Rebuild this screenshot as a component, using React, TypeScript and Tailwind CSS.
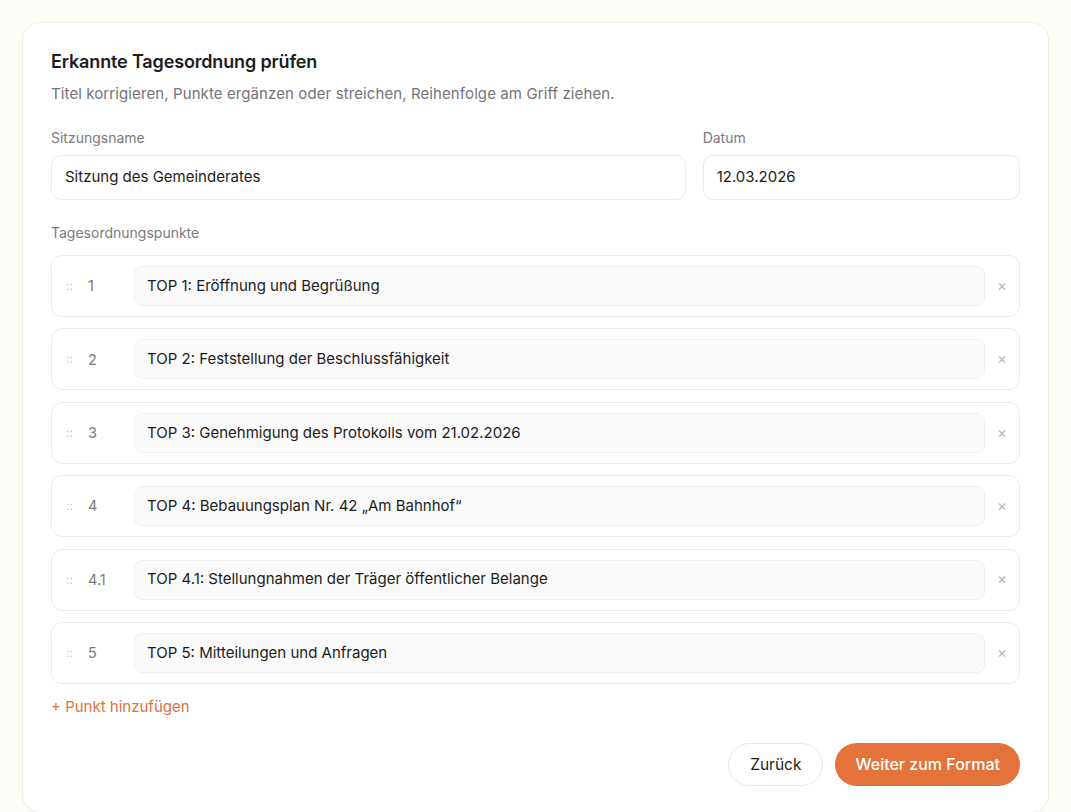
import React from "react";

const items = [
  { n: "1", t: "TOP 1: Eröffnung und Begrüßung" },
  { n: "2", t: "TOP 2: Feststellung der Beschlussfähigkeit" },
  { n: "3", t: "TOP 3: Genehmigung des Protokolls vom 21.02.2026" },
  { n: "4", t: "TOP 4: Bebauungsplan Nr. 42 „Am Bahnhof“" },
  { n: "4.1", t: "TOP 4.1: Stellungnahmen der Träger öffentlicher Belange" },
  { n: "5", t: "TOP 5: Mitteilungen und Anfragen" },
];

export default function App() {
  return (
    <div
      className="min-h-[812px] bg-[#fdfcf6] px-[22px] pt-[22px]"
      style={{ fontFamily: "Inter, 'Noto Sans', sans-serif" }}
    >
      <div className="rounded-[18px] border border-[#ecebe6] bg-white px-[28px] pt-[27px] pb-[26px]">
        <h1 className="text-[18px] font-semibold leading-[24px] text-[#1c1c1c] tracking-[-0.15px]">
          Erkannte Tagesordnung prüfen
        </h1>
        <p className="mt-[10px] text-[15px] leading-[20px] tracking-[0.1px] text-[#74747a]">
          Titel korrigieren, Punkte ergänzen oder streichen, Reihenfolge am Griff ziehen.
        </p>

        <div className="mt-[25px] grid grid-cols-[2fr_1fr] gap-x-[17px]">
          <div>
            <div className="text-[14px] leading-[18px] text-[#7a7a7e]">Sitzungsname</div>
            <div className="mt-[8px] flex h-[45px] items-center rounded-[10px] border border-[#ebebeb] bg-white px-[13px] text-[15px] text-[#1c1c1c]">
              Sitzung des Gemeinderates
            </div>
          </div>
          <div>
            <div className="text-[14px] leading-[18px] text-[#7a7a7e]">Datum</div>
            <div className="mt-[8px] flex h-[45px] items-center rounded-[10px] border border-[#ebebeb] bg-white px-[13px] text-[15px] text-[#1c1c1c]">
              12.03.2026
            </div>
          </div>
        </div>

        <div className="mt-[24px] text-[14px] leading-[18px] text-[#7a7a7e]">Tagesordnungspunkte</div>
        <div className="mt-[13px] flex flex-col gap-[11.4px]">
          {items.map((it) => (
            <div
              key={it.n}
              className="flex h-[62px] items-center rounded-[11px] border border-[#ebebeb] bg-white pl-[14px]"
            >
              <span className="w-[22px] text-[12px] text-[#c8c8c8] leading-none">::</span>
              <span className="w-[46px] text-[14.5px] text-[#7a7a7e]">{it.n}</span>
              <div className="flex h-[40px] flex-1 items-center rounded-[8px] border border-[#f0f0f0] bg-[#fafafa] px-[12px] text-[15px] text-[#1c1c1c]">
                {it.t}
              </div>
              <span className="flex w-[34px] justify-center text-[15px] text-[#b8b8b8]">×</span>
            </div>
          ))}
        </div>

        <div className="mt-[13px] text-[15px] leading-[20px] text-[#e0733a]">+ Punkt hinzufügen</div>

        <div className="mt-[26px] flex justify-end gap-[12px]">
          <button className="h-[43px] rounded-full border border-[#e8e8e8] bg-white px-[21px] text-[15.5px] text-[#1c1c1c]">
            Zurück
          </button>
          <button className="h-[43px] rounded-full bg-[#e3733a] px-[20px] text-[16px] font-medium text-white">
            Weiter zum Format
          </button>
        </div>
      </div>
    </div>
  );
}
